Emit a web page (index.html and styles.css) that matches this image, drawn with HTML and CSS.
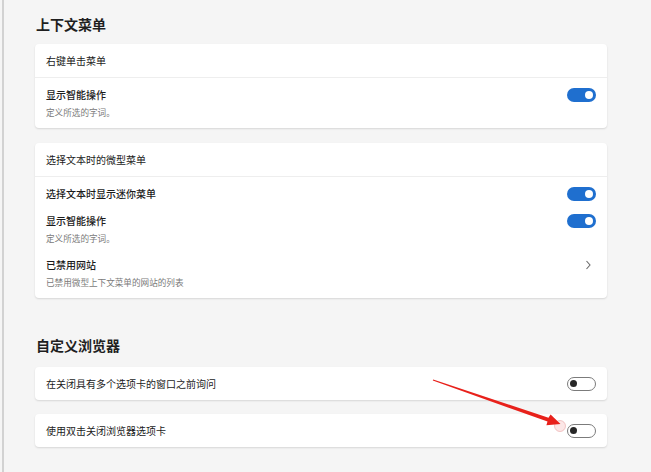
FILE: index.html
```html
<!DOCTYPE html>
<html lang="zh-CN">
<head>
<meta charset="utf-8">
<title>设置</title>
<link rel="stylesheet" href="styles.css">
</head>
<body>
<div class="page">
  <section class="section">
    <h2 class="section-title">上下文菜单</h2>
    <div class="card">
      <div class="card-head">右键单击菜单</div>
      <div class="card-body">
        <div class="row">
          <div class="row-text">
            <div class="row-title">显示智能操作</div>
            <div class="row-sub">定义所选的字词。</div>
          </div>
          <span class="toggle on"><span class="knob"></span></span>
        </div>
      </div>
    </div>
    <div class="card">
      <div class="card-head">选择文本时的微型菜单</div>
      <div class="card-body">
        <div class="row">
          <div class="row-text">
            <div class="row-title">选择文本时显示迷你菜单</div>
          </div>
          <span class="toggle on"><span class="knob"></span></span>
        </div>
        <div class="row">
          <div class="row-text">
            <div class="row-title">显示智能操作</div>
            <div class="row-sub">定义所选的字词。</div>
          </div>
          <span class="toggle on"><span class="knob"></span></span>
        </div>
        <div class="row">
          <div class="row-text">
            <div class="row-title">已禁用网站</div>
            <div class="row-sub">已禁用微型上下文菜单的网站的列表</div>
          </div>
          <svg class="chevron" width="8" height="14" viewBox="0 0 8 14"><path d="M2.5 3 L6 7 L2.5 11" fill="none" stroke="#6a6a6a" stroke-width="1.1"/></svg>
        </div>
      </div>
    </div>
  </section>
  <section class="section second">
    <h2 class="section-title">自定义浏览器</h2>
    <div class="card single">
      <div class="row-title plain">在关闭具有多个选项卡的窗口之前询问</div>
      <span class="toggle off"><span class="knob"></span></span>
    </div>
    <div class="card single">
      <div class="row-title plain">使用双击关闭浏览器选项卡</div>
      <span class="toggle off"><span class="knob"></span></span>
    </div>
  </section>
</div>
<svg class="annot" width="651" height="472" viewBox="0 0 651 472">
  <circle cx="560" cy="426" r="5.5" fill="rgba(240,120,120,0.18)" stroke="rgba(230,150,150,0.5)" stroke-width="1"/>
  <polygon points="433.2,379.5 548.5,417.8 550.6,414.6 560.5,424 546.4,425.2 547.5,421.6 432.8,380.5" fill="#e8211b"/>
</svg>
</body>
</html>
```
FILE: styles.css
```css
* { box-sizing: border-box; }
html, body { margin: 0; padding: 0; }
body {
  background: #f5f5f5;
  font-family: "Noto Sans CJK SC", "Noto Sans", sans-serif;
  color: #1b1b1b;
  width: 651px;
  height: 472px;
  overflow: hidden;
  position: relative;
}
.page {
  margin-left: 2px;
  border-left: 2px solid #d2d2d2;
  min-height: 472px;
  padding: 14px 44px 0 31px;
}
.section-title {
  margin: 0 0 10px 1px;
  font-size: 14px;
  line-height: 20px;
  font-weight: 700;
  color: #1f1f1f;
}
.section.second { margin-top: 37px; }
.section.second .section-title { margin-bottom: 12px; }
.card {
  background: #fff;
  border-radius: 4px;
  box-shadow: 0 1px 2px rgba(0,0,0,0.13);
  margin-bottom: 15px;
  width: 572px;
}
.section.second .card { margin-bottom: 14px; }
.card-head {
  height: 34px;
  border-bottom: 1px solid #eeeeee;
  padding: 0 11px;
  font-size: 10px;
  line-height: 33px;
}
.card-body {
  padding: 10px 11px 9px;
  display: flex;
  flex-direction: column;
  gap: 13px;
}
.row {
  display: flex;
  justify-content: space-between;
  align-items: flex-start;
}
.row-title {
  font-size: 10px;
  line-height: 14px;
  font-weight: 500;
  color: #1b1b1b;
}
.row-title.plain { font-weight: 400; }
.row-sub {
  margin-top: 3px;
  font-size: 8.6px;
  line-height: 14px;
  color: #7a7a7a;
}
.card.single {
  height: 33px;
  padding: 0 11px;
  display: flex;
  align-items: center;
  justify-content: space-between;
}
.toggle {
  width: 29px;
  height: 14px;
  border-radius: 7px;
  display: flex;
  align-items: center;
  flex: none;
}
.toggle.on {
  background: #1f6fcf;
  justify-content: flex-end;
  padding-right: 3px;
}
.toggle.on .knob {
  width: 8px;
  height: 8px;
  border-radius: 50%;
  background: #fff;
}
.toggle.off {
  background: #fff;
  border: 1px solid #7b7b7b;
  justify-content: flex-start;
  padding-left: 2px;
}
.toggle.off .knob {
  width: 7px;
  height: 7px;
  border-radius: 50%;
  background: #272727;
}
.chevron { margin-right: 4px; flex: none; }
.annot {
  position: absolute;
  left: 0;
  top: 0;
  pointer-events: none;
}
```
